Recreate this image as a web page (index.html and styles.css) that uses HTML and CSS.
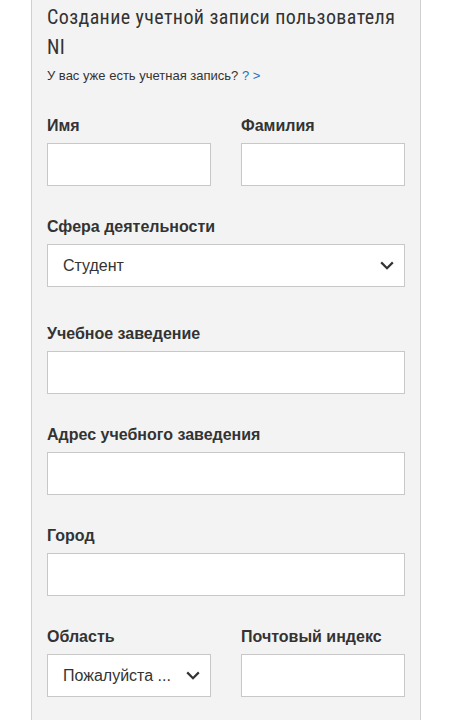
FILE: index.html
```html
<!DOCTYPE html>
<html lang="ru">
<head>
<meta charset="utf-8">
<title>Создание учетной записи пользователя NI</title>
<link rel="stylesheet" href="styles.css">
</head>
<body>
<div class="panel">
  <h1 class="title">Создание учетной записи пользователя<br>NI</h1>
  <p class="login">У вас уже есть учетная запись? <a class="login-link" href="#">? &gt;</a></p>

  <div class="row">
    <div class="field">
      <label class="label">Имя</label>
      <input class="input" type="text">
    </div>
    <div class="field">
      <label class="label">Фамилия</label>
      <input class="input" type="text">
    </div>
  </div>

  <div class="field field-select">
    <label class="label">Сфера деятельности</label>
    <div class="select">
      <span class="select-text">Студент</span>
      <svg class="chevron" width="14" height="9" viewBox="0 0 14 9"><path d="M1.2 1.4 L7 7.2 L12.8 1.4" fill="none" stroke="#333" stroke-width="2.2"/></svg>
    </div>
  </div>

  <div class="field">
    <label class="label">Учебное заведение</label>
    <input class="input" type="text">
  </div>

  <div class="field">
    <label class="label">Адрес учебного заведения</label>
    <input class="input" type="text">
  </div>

  <div class="field">
    <label class="label">Город</label>
    <input class="input" type="text">
  </div>

  <div class="row">
    <div class="field">
      <label class="label">Область</label>
      <div class="select">
        <span class="select-text">Пожалуйста ...</span>
        <svg class="chevron" width="14" height="9" viewBox="0 0 14 9"><path d="M1.2 1.4 L7 7.2 L12.8 1.4" fill="none" stroke="#333" stroke-width="2.2"/></svg>
      </div>
    </div>
    <div class="field">
      <label class="label">Почтовый индекс</label>
      <input class="input" type="text">
    </div>
  </div>
</div>
</body>
</html>
```

FILE: styles.css
```css
html, body {
  margin: 0;
  padding: 0;
  background: #ffffff;
}

body {
  font-family: "Liberation Sans", Arial, sans-serif;
  color: #333333;
}

.panel {
  margin-left: 31px;
  width: 390px;
  min-height: 760px;
  box-sizing: border-box;
  background: #f3f3f3;
  border-left: 1px solid #cfcfcf;
  border-right: 1px solid #cfcfcf;
  padding: 2px 15px 0 15px;
}

.title {
  margin: 0;
  font-family: Roboto, "Liberation Sans", sans-serif;
  font-weight: 400;
  font-size: 20px;
  font-stretch: 86%;
  letter-spacing: 0.4px;
  line-height: 30px;
  color: #333333;
}

.login {
  margin: 5px 0 0 0;
  font-size: 13px;
  line-height: 18px;
  color: #333333;
}

.login-link {
  color: #2a6ebb;
  text-decoration: none;
}

.row {
  display: grid;
  grid-template-columns: 1fr 1fr;
  column-gap: 30px;
}

.field {
  display: flex;
  flex-direction: column;
  padding-top: 31px;
}

.field-select {
  padding-bottom: 6px;
}

.label {
  display: block;
  font-size: 16px;
  font-weight: 700;
  line-height: 20px;
  margin-bottom: 7px;
  color: #333333;
}

.input {
  display: block;
  box-sizing: border-box;
  width: 100%;
  height: 43px;
  margin: 0;
  border: 1px solid #c8c8c8;
  border-radius: 0;
  background: #ffffff;
  font-family: "Liberation Sans", Arial, sans-serif;
  font-size: 16px;
  padding: 0 15px;
  outline: none;
}

.select {
  display: flex;
  align-items: center;
  justify-content: space-between;
  box-sizing: border-box;
  height: 43px;
  border: 1px solid #c8c8c8;
  background: #ffffff;
  padding: 0 10px 0 15px;
}

.select-text {
  font-size: 16px;
  color: #333333;
  white-space: nowrap;
}

.chevron {
  display: block;
  flex: none;
}
```
